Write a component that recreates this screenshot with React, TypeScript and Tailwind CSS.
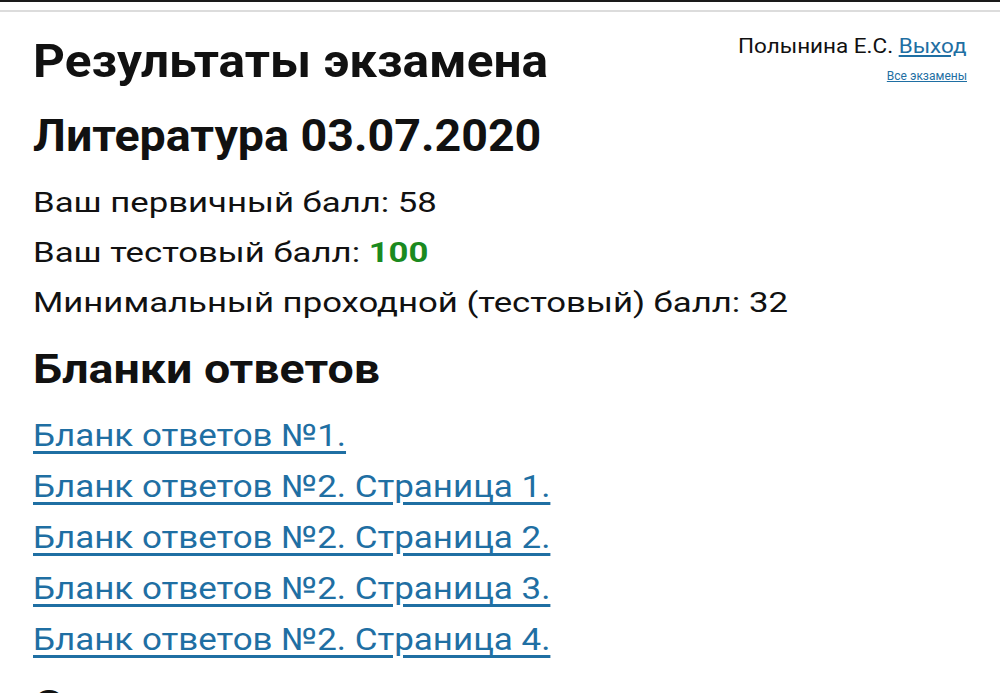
const links = [
  'Бланк ответов №1.',
  'Бланк ответов №2. Страница 1.',
  'Бланк ответов №2. Страница 2.',
  'Бланк ответов №2. Страница 3.',
  'Бланк ответов №2. Страница 4.',
]

export default function App() {
  return (
    <div className="min-h-screen overflow-hidden bg-white text-[#111] font-['Roboto','Noto_Sans',sans-serif]">
      <div className="h-[2px] bg-[#1a1a1a]" />
      <div className="mt-[8px] h-[2px] bg-[#dcdcdc]" />

      <div className="px-[33px]">
        <div className="flex items-start justify-between">
          <h1 className="mt-[21px] text-[47px] leading-[56px] font-bold">
            <span className="inline-block origin-left scale-x-[1.055]">Результаты экзамена</span>
          </h1>
          <div className="pt-[22px] text-right">
            <p className="text-[21px] leading-[24px]">
              <span className="inline-block origin-right scale-x-[1.07]">
                Полынина Е.С.{' '}
                <a href="#" className="text-[#1f6fa3] underline">Выход</a>
              </span>
            </p>
            <a href="#" className="mt-[11px] block text-[12px] leading-[14px] text-[#1f6fa3] underline">
              Все экзамены
            </a>
          </div>
        </div>

        <h2 className="mt-[21px] text-[45px] leading-[52px] font-bold">
          <span className="inline-block origin-left scale-x-[1.035]">Литература 03.07.2020</span>
        </h2>

        <div className="mt-[16px] text-[28px] leading-[50px]">
          <p>
            <span className="inline-block origin-left scale-x-[1.24]">Ваш первичный балл: 58</span>
          </p>
          <p>
            <span className="inline-block origin-left scale-x-[1.24]">
              Ваш тестовый балл: <span className="font-bold text-[#1b8a1f]">100</span>
            </span>
          </p>
          <p>
            <span className="inline-block origin-left scale-x-[1.24]">Минимальный проходной (тестовый) балл: 32</span>
          </p>
        </div>

        <h2 className="mt-[17px] text-[41px] leading-[48px] font-bold">
          <span className="inline-block origin-left scale-x-[1.135]">Бланки ответов</span>
        </h2>

        <ul className="mt-[17px] text-[31px] leading-[51px]">
          {links.map((l) => (
            <li key={l}>
              <a
                href="#"
                className="inline-block origin-left scale-x-[1.127] text-[#1f6fa3] underline decoration-[2.5px] underline-offset-[5px]"
              >
                {l}
              </a>
            </li>
          ))}
        </ul>

        <h2 className="mt-[16px] text-[41px] leading-[48px] font-bold">
          <span className="inline-block origin-left scale-x-[1.135]">Справка</span>
        </h2>
      </div>
    </div>
  )
}
